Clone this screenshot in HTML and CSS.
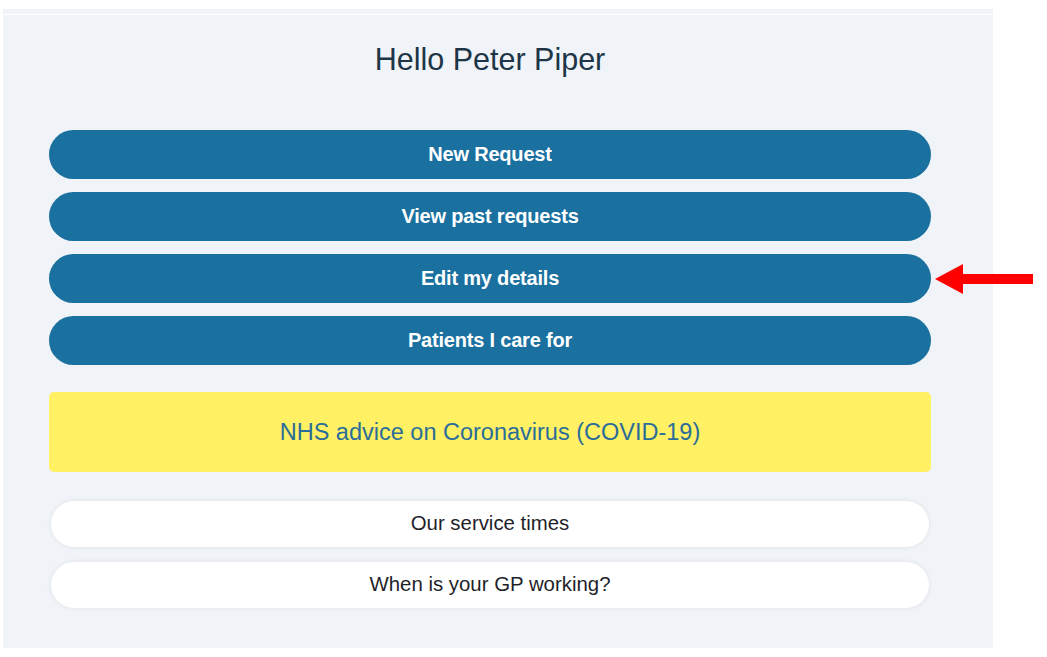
FILE: index.html
```html
<!DOCTYPE html>
<html lang="en">
<head>
<meta charset="utf-8">
<title>Home</title>
<link rel="stylesheet" href="styles.css">
</head>
<body>
<div class="wrap">
  <div class="topbar"></div>
  <main class="panel">
    <h1 class="greeting">Hello Peter Piper</h1>
    <nav class="actions">
      <a class="btn btn-primary" href="#">New Request</a>
      <a class="btn btn-primary" href="#">View past requests</a>
      <a class="btn btn-primary btn-marked" href="#">Edit my details
        <svg class="arrow" width="100" height="32" viewBox="0 0 100 32" aria-hidden="true">
          <polygon points="0,15 28,0 28,10 98,10 98,20 28,20 28,30" fill="#ff0000"/>
        </svg>
      </a>
      <a class="btn btn-primary" href="#">Patients I care for</a>
    </nav>
    <a class="notice" href="#">NHS advice on Coronavirus (COVID-19)</a>
    <nav class="info">
      <a class="btn btn-light" href="#">Our service times</a>
      <a class="btn btn-light" href="#">When is your GP working?</a>
    </nav>
  </main>
</div>
</body>
</html>
```
FILE: styles.css
```css
html, body {
  margin: 0;
  padding: 0;
  background: #ffffff;
}
body {
  font-family: "Liberation Sans", Arial, sans-serif;
}
.wrap {
  width: 990px;
  padding: 9px 0 0 3px;
}
.topbar {
  height: 5px;
  background: #f0f3f7;
  margin-bottom: 1px;
}
.panel {
  display: block;
  height: 633px;
  box-sizing: border-box;
  background: #f0f3f7;
  padding: 26px 62px 0 46px;
}
.greeting {
  margin: 0;
  text-align: center;
  font-weight: normal;
  font-size: 30.5px;
  line-height: 36px;
  color: #1d3547;
}
.actions {
  display: flex;
  flex-direction: column;
  gap: 13px;
  margin-top: 53px;
}
.btn {
  display: flex;
  align-items: center;
  justify-content: center;
  text-decoration: none;
  border-radius: 25px;
  font-size: 20px;
}
.btn-primary {
  height: 49px;
  background: #1a709f;
  color: #ffffff;
  font-weight: bold;
  letter-spacing: -0.2px;
}
.btn-marked {
  position: relative;
}
.arrow {
  position: absolute;
  left: 886px;
  top: 10px;
}
.notice {
  display: flex;
  align-items: center;
  justify-content: center;
  height: 80px;
  margin-top: 27px;
  background: #fff064;
  border-radius: 5px;
  color: #2b6d99;
  font-size: 23.5px;
  text-decoration: none;
}
.info {
  display: flex;
  flex-direction: column;
  gap: 15px;
  margin-top: 29px;
}
.btn-light {
  height: 46px;
  box-sizing: border-box;
  padding-bottom: 2px;
  background: #ffffff;
  color: #1f1f2a;
  font-size: 20.4px;
  box-shadow: 0 0 4px 1px rgba(0, 0, 0, 0.05);
  margin: 0 2px;
}
```
